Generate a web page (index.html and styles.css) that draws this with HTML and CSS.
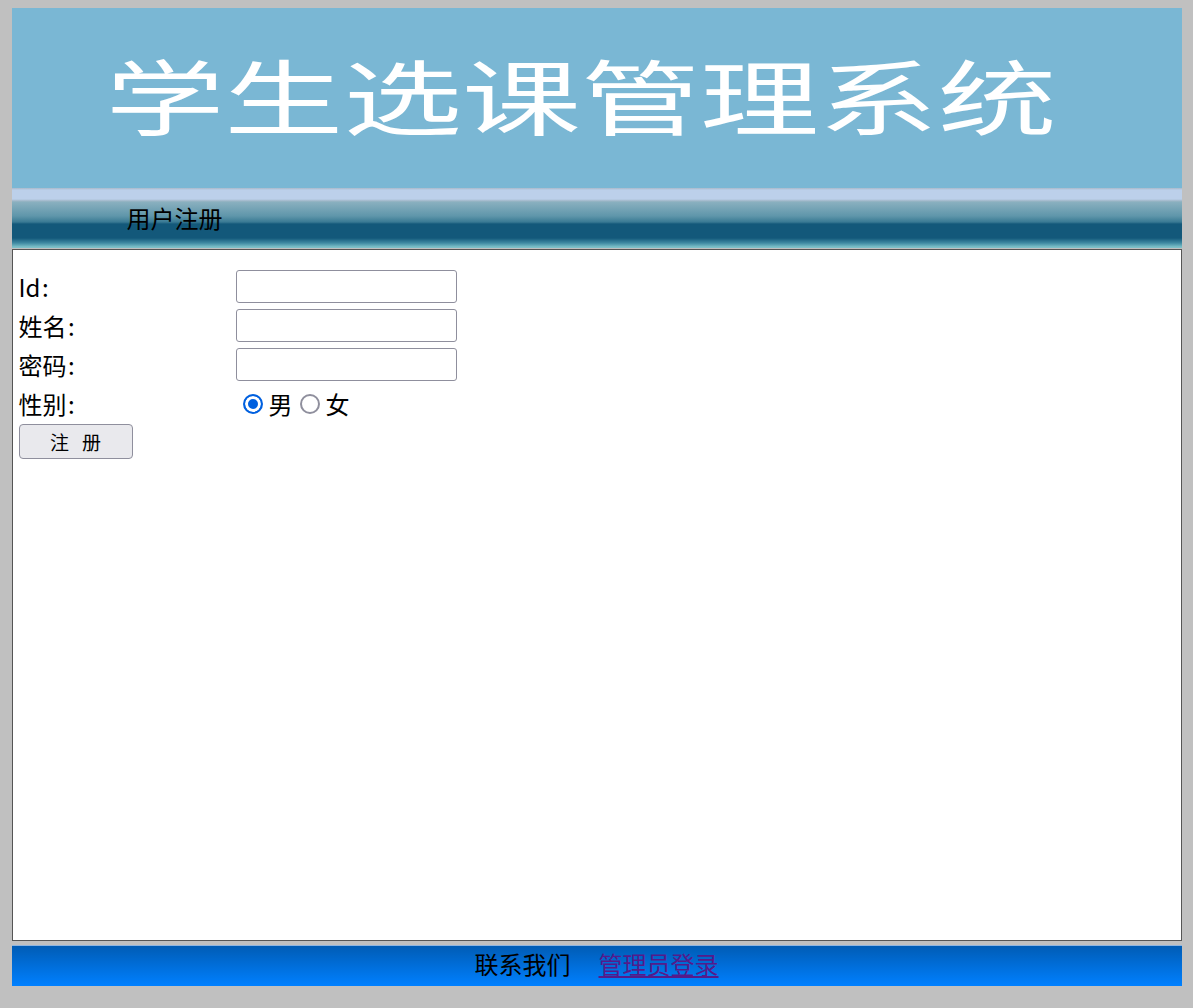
FILE: index.html
```html
<!DOCTYPE html>
<html lang="zh-CN">
<head>
    <meta charset="UTF-8">
    <title>用户注册</title>
    <link rel="stylesheet" href="styles.css">
</head>
<body>

    <div class="wrapper">
        <!-- Banner -->
        <div class="banner">
            <span class="banner-title">学生选课管理系统</span>
        </div>

        <!-- Nav -->
        <div class="nav">
            <span class="nav-title">用户注册</span>
        </div>

        <!-- Register Form -->
        <div class="main">
            <form class="reg-form">
                <label class="field-label" for="uid">Id&#8202;:</label>
                <input class="field-input" type="text" id="uid" name="id">

                <label class="field-label" for="uname">姓名&#8202;:</label>
                <input class="field-input" type="text" id="uname" name="name">

                <label class="field-label" for="upass">密码&#8202;:</label>
                <input class="field-input" type="password" id="upass" name="password">

                <span class="field-label">性别&#8202;:</span>
                <div class="sex-group">
                    <input class="radio" type="radio" name="sex" value="男" checked><span>男</span>
                    <input class="radio" type="radio" name="sex" value="女"><span>女</span>
                </div>

                <button class="btn-submit" type="button">注&nbsp;&nbsp;&nbsp;册</button>
            </form>
        </div>

        <!-- Footer -->
        <div class="footer">
            <span>联系我们</span>
            <a class="admin-link" href="#">管理员登录</a>
        </div>
    </div>

</body>
</html>
```

FILE: styles.css
```css
/* Global */
body {
    margin: 8px;
    background: #c0c0c0;
    font-family: "Noto Sans CJK SC", "Noto Sans", sans-serif;
}

.wrapper {
    width: 1170px;
    margin: 0 auto;
}

/* Banner */
.banner {
    height: 180px;
    background: #7ab7d4;
    display: flex;
    justify-content: center;
    align-items: center;
    overflow: hidden;
}

.banner-title {
    display: inline-block;
    color: #fff;
    font-size: 82px;
    line-height: 1;
    white-space: nowrap;
    transform: scaleX(1.45);
    margin: 0 0 9px -30px;
}

/* Nav */
.nav {
    height: 60px;
    background: linear-gradient(to bottom,
        #a9b9c9 0px, #bcd0ea 2px, #bcd0ea 11px, #9fb6c6 13px,
        #8ab0bf 14px, #5f96aa 28px, #3a7a94 34px, #13587a 36px,
        #13587a 50px, #3f8aa2 55px, #7cc0c8 59px);
    display: flex;
    align-items: center;
}

.nav-title {
    margin-left: 115px;
    margin-bottom: 2px;
    font-size: 24px;
    color: #000;
}

/* Main */
.main {
    height: 690px;
    margin-top: 1px;
    background: #fff;
    border: 1px solid #555;
}

.reg-form {
    display: grid;
    grid-template-columns: 217px 221px;
    row-gap: 6px;
    padding: 20px 0 0 6px;
}

.field-label {
    font-size: 24px;
    line-height: 33px;
    color: #000;
    display: flex;
    align-items: center;
}

.field-input {
    width: 221px;
    height: 33px;
    box-sizing: border-box;
    border: 1px solid #8f8f9d;
    border-radius: 3px;
    padding: 2px 4px;
    font-size: 16px;
    margin: 0;
}

.sex-group {
    display: flex;
    align-items: center;
    font-size: 24px;
    line-height: 30px;
    padding-left: 7px;
}

.radio {
    appearance: none;
    width: 20px;
    height: 20px;
    margin: 0 6px 0 0;
    border: 2px solid #8f8f9d;
    border-radius: 50%;
    box-sizing: border-box;
    background: #fff;
}

.radio:checked {
    border-color: #0060df;
    background: #0060df;
    box-shadow: inset 0 0 0 3px #fff;
}

.sex-group span {
    margin-right: 7px;
}

.btn-submit {
    grid-column: 1;
    width: 114px;
    height: 35px;
    margin-top: -2px;
    padding: 0;
    background: #e9e9ed;
    border: 1px solid #8f8f9d;
    border-radius: 4px;
    font-family: "Noto Sans CJK SC", sans-serif;
    font-size: 19px;
    color: #000;
    cursor: pointer;
}

/* Footer */
.footer {
    height: 41px;
    box-sizing: border-box;
    margin-top: 4px;
    padding-bottom: 5px;
    border-top: 1px solid #8fb5e0;
    background: linear-gradient(to bottom, #005cb5, #0080ff);
    display: flex;
    justify-content: center;
    align-items: center;
    font-size: 24px;
    color: #000;
}

.admin-link {
    margin-left: 28px;
    color: #551a8b;
}
```
